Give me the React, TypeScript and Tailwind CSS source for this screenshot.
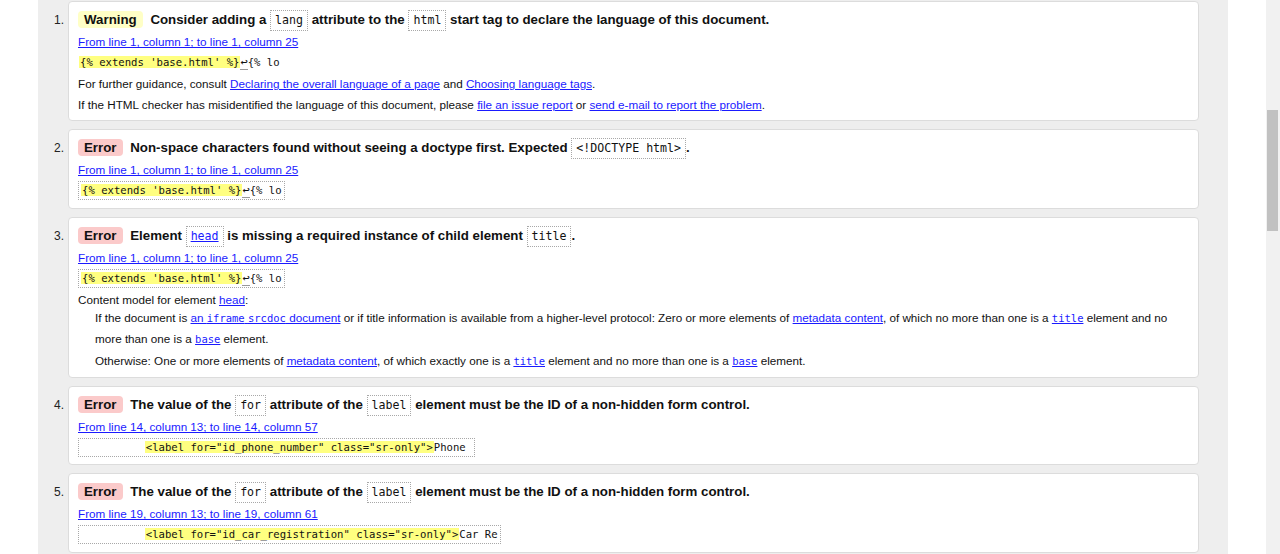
import React from "react";

const sans = "font-['Liberation_Sans',Arial,sans-serif]";
const mono = "font-['DejaVu_Sans_Mono',monospace]";

function Badge({ kind }: { kind: "Warning" | "Error" }) {
  return (
    <span
      className={`inline-block rounded-[4px] px-[6px] leading-[17px] mr-[4px] ${
        kind === "Warning" ? "bg-[#ffffc6]" : "bg-[#fbcaca]"
      }`}
    >
      {kind}
    </span>
  );
}

function Code({ children, link }: { children: React.ReactNode; link?: boolean }) {
  return (
    <code
      className={`${mono} inline-block border border-dotted border-[#a8a8a8] px-[4px] leading-[19px] text-[11.6px] font-normal ${
        link ? "text-[#1a1aff] underline" : "text-[#111]"
      }`}
    >
      {children}
    </code>
  );
}

function A({ children }: { children: React.ReactNode }) {
  return <a className="text-[#1a1aff] underline cursor-pointer">{children}</a>;
}

function MonoA({ children }: { children: React.ReactNode }) {
  return (
    <code className={`${mono} text-[10.5px] leading-none text-[#1a1aff] underline`}>{children}</code>
  );
}

function Extract({
  lead = "",
  hi,
  rest,
  lf,
  plain,
}: {
  lead?: string;
  hi: string;
  rest: string;
  lf?: boolean;
  plain?: boolean;
}) {
  return (
    <div className="h-[21px] flex items-center">
      <code
        className={`${mono} inline-block whitespace-pre text-[10.6px] leading-[17px] text-[#111] ${
          plain ? "px-[1px]" : "border border-dotted border-[#a8a8a8] px-[2px]"
        }`}
      >
        {lead}
        <span className="bg-[#ffff80] px-[1px]">{hi}</span>
        {lf && <span className="border-b border-[#999] text-[12px] leading-none">↩</span>}
        {rest}
      </code>
    </div>
  );
}

function Item({
  n,
  children,
  pb = "pb-[7px]",
}: {
  n: number;
  children: React.ReactNode;
  pb?: string;
}) {
  return (
    <div className="flex">
      <div className="w-[30px] shrink-0 text-right pr-[4px] pt-[9px] leading-[21px] text-[12px] text-[#222]">
        {n}.
      </div>
      <div
        className={`w-[1131px] bg-white border border-[#dcdcdc] rounded-[4px] pt-[6px] ${pb} pl-[9px] pr-[10px]`}
      >
        {children}
      </div>
    </div>
  );
}

function Heading({ children }: { children: React.ReactNode }) {
  return (
    <div className="h-[23px] flex items-center">
      <div className="text-[13.3px] font-bold leading-[23px] text-[#111] whitespace-nowrap">{children}</div>
    </div>
  );
}

function Loc({ children }: { children: React.ReactNode }) {
  return (
    <div className="leading-[21px] text-[11.7px]">
      <A>{children}</A>
    </div>
  );
}

export default function App() {
  return (
    <div className={`${sans} h-[554px] w-[1280px] overflow-hidden flex bg-white`}>
      <div className="w-[38px] shrink-0" />
      <div className="w-[1190px] shrink-0 bg-[#eeeeee] pt-[1px] flex flex-col gap-[8px]">
        <Item n={1} pb="pb-[5px]">
          <Heading>
            <Badge kind="Warning" /> Consider adding a <Code>lang</Code> attribute to the{" "}
            <Code>html</Code> start tag to declare the language of this document.
          </Heading>
          <Loc>From line 1, column 1; to line 1, column 25</Loc>
          <Extract plain hi="{% extends 'base.html' %}" lf rest="{% lo" />
          <div className="leading-[21px] text-[11.7px] text-[#111]">
            For further guidance, consult <A>Declaring the overall language of a page</A> and{" "}
            <A>Choosing language tags</A>.
          </div>
          <div className="leading-[21px] text-[11.7px] text-[#111]">
            If the HTML checker has misidentified the language of this document, please{" "}
            <A>file an issue report</A> or <A>send e-mail to report the problem</A>.
          </div>
        </Item>

        <Item n={2}>
          <Heading>
            <Badge kind="Error" /> Non-space characters found without seeing a doctype first. Expected{" "}
            <Code>&lt;!DOCTYPE html&gt;</Code>.
          </Heading>
          <Loc>From line 1, column 1; to line 1, column 25</Loc>
          <Extract hi="{% extends 'base.html' %}" lf rest="{% lo" />
        </Item>

        <Item n={3} pb="pb-[6px]">
          <Heading>
            <Badge kind="Error" /> Element <Code link>head</Code> is missing a required instance of child
            element <Code>title</Code>.
          </Heading>
          <Loc>From line 1, column 1; to line 1, column 25</Loc>
          <Extract hi="{% extends 'base.html' %}" lf rest="{% lo" />
          <div className="leading-[21px] text-[11.7px] text-[#111]">
            Content model for element <A>head</A>:
          </div>
          <div className="-mt-[3px] ml-[17px] text-[11.7px] text-[#111]">
            <p className="leading-[21px]">
              If the document is{" "}
              <a className="text-[#1a1aff] underline">
                an <code className={`${mono} text-[10.5px] leading-none`}>iframe</code>{" "}
                <code className={`${mono} text-[10.5px] leading-none`}>srcdoc</code> document
              </a>{" "}
              or if title information is available from a higher-level protocol: Zero or more elements of{" "}
              <A>metadata content</A>, of which no more than one is a <MonoA>title</MonoA> element and no
              more than one is a <MonoA>base</MonoA> element.
            </p>
            <p className="leading-[21px] mt-[1px]">
              Otherwise: One or more elements of <A>metadata content</A>, of which exactly one is a{" "}
              <MonoA>title</MonoA> element and no more than one is a <MonoA>base</MonoA> element.
            </p>
          </div>
        </Item>

        <Item n={4} pb="pb-[6px]">
          <Heading>
            <Badge kind="Error" /> The value of the <Code>for</Code> attribute of the <Code>label</Code>{" "}
            element must be the ID of a non-hidden form control.
          </Heading>
          <Loc>From line 14, column 13; to line 14, column 57</Loc>
          <Extract
            lead="          "
            hi={'<label for="id_phone_number" class="sr-only">'}
            rest="Phone "
          />
        </Item>

        <Item n={5}>
          <Heading>
            <Badge kind="Error" /> The value of the <Code>for</Code> attribute of the <Code>label</Code>{" "}
            element must be the ID of a non-hidden form control.
          </Heading>
          <Loc>From line 19, column 13; to line 19, column 61</Loc>
          <Extract
            lead="          "
            hi={'<label for="id_car_registration" class="sr-only">'}
            rest="Car Re"
          />
        </Item>
      </div>
      <div className="w-[38px] shrink-0" />
      <div className="w-[14px] shrink-0 bg-[#f1f1f1] pl-[1px] pr-[2px]">
        <div className="mt-[110px] h-[121px] bg-[#c1c1c1]" />
      </div>
    </div>
  );
}
